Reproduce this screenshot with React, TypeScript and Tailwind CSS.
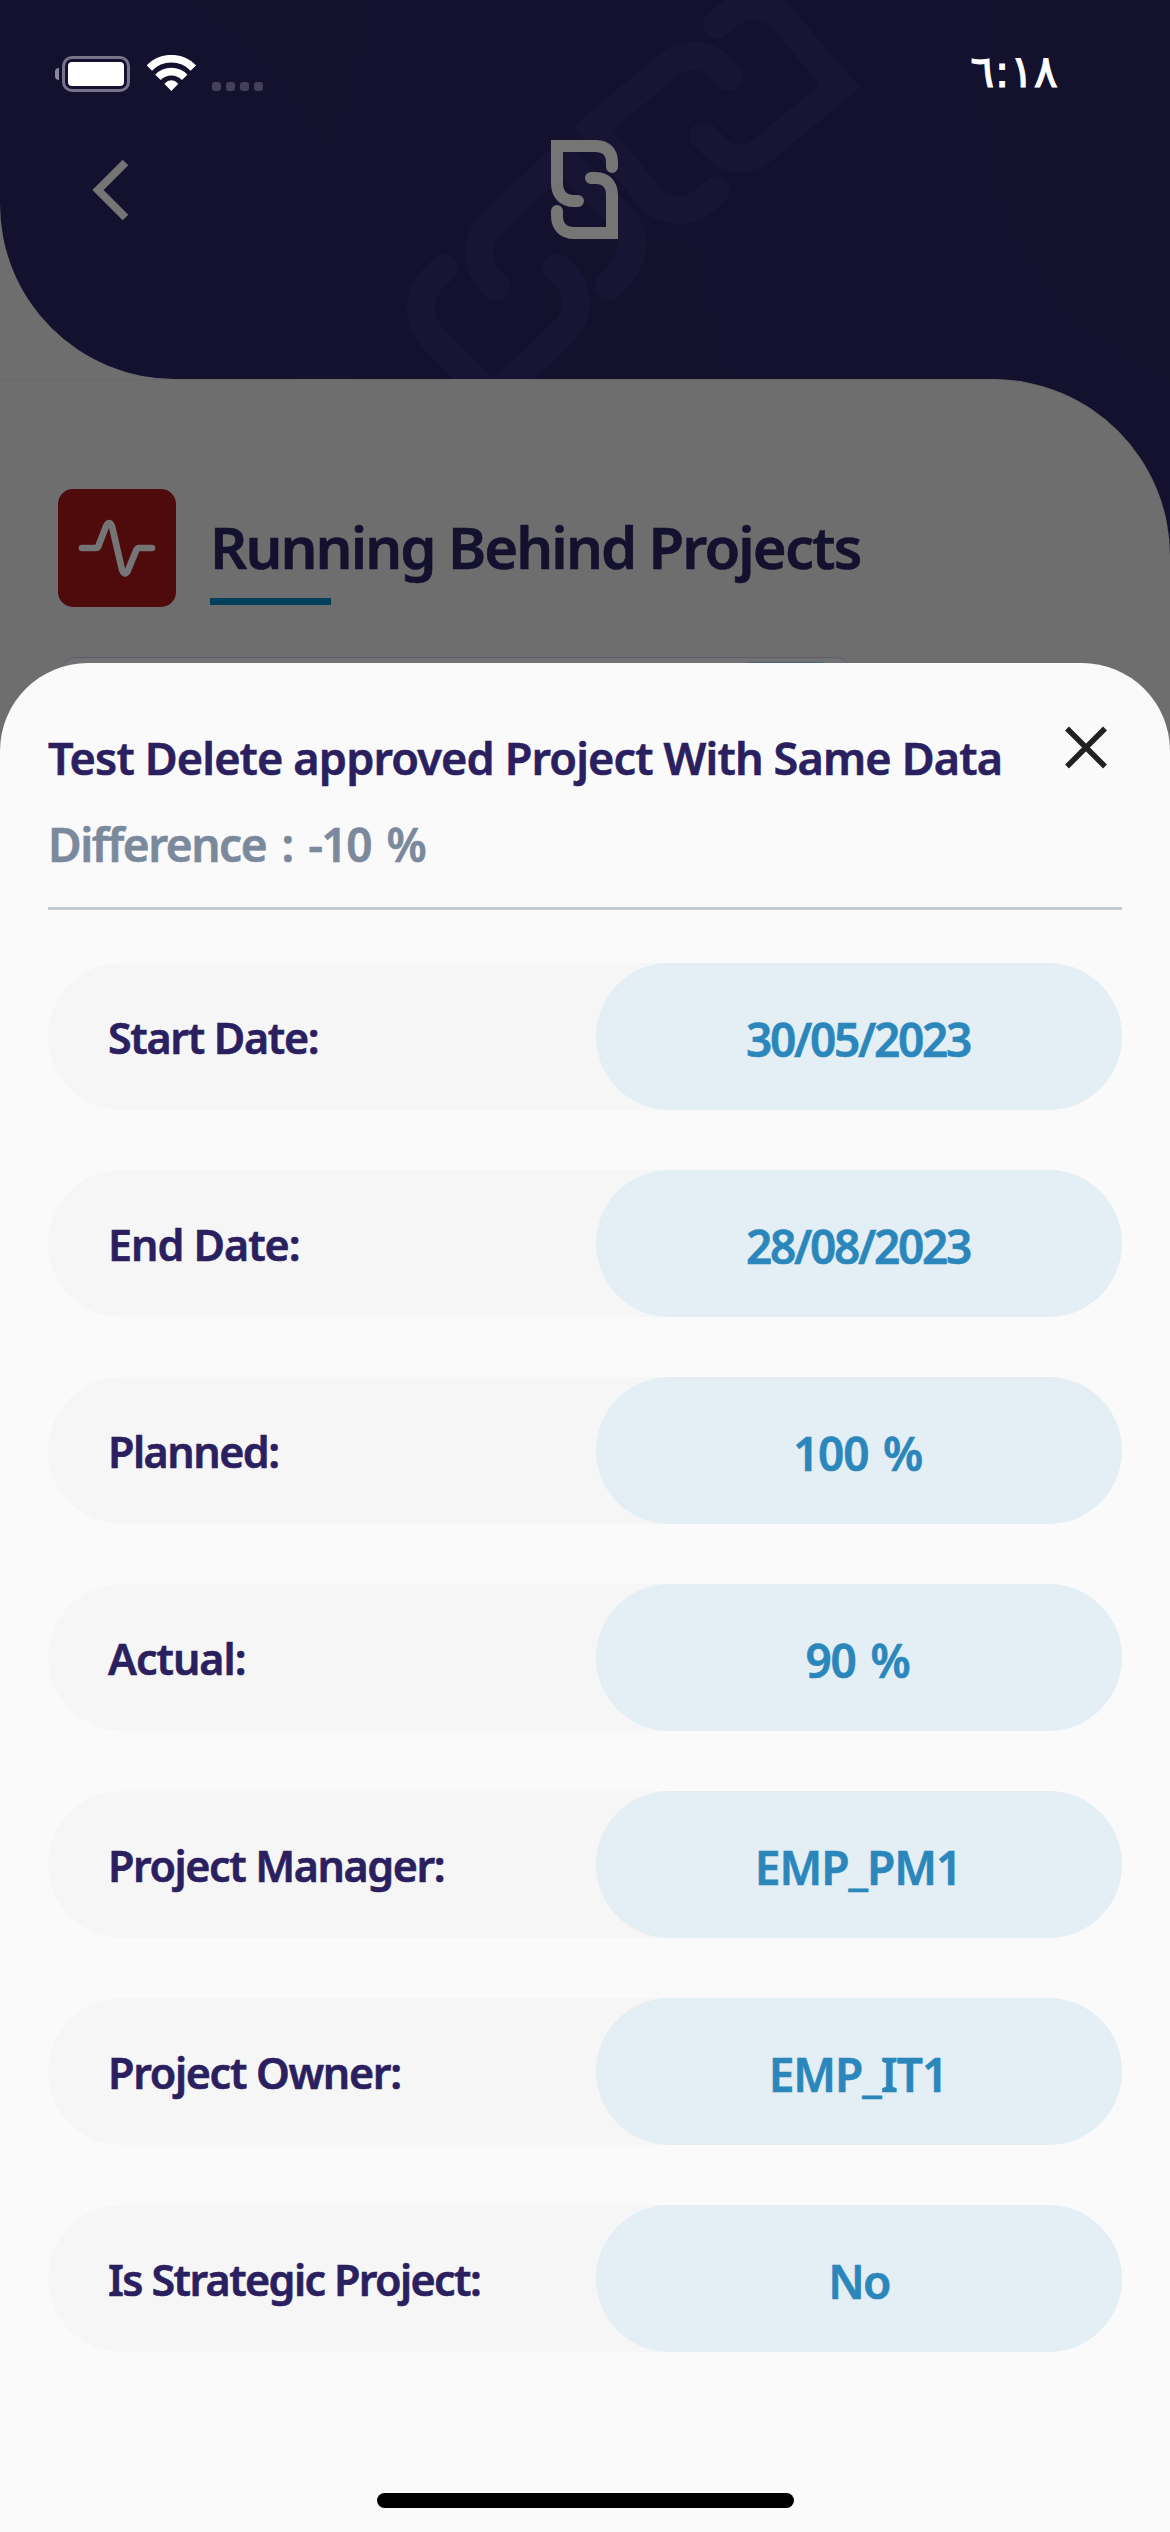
const rows = [
  { label: "Start Date:", value: "30/05/2023", labelClass: "tracking-[-1.3px]", valueClass: "tracking-[-2.3px] mr-[2px]" },
  { label: "End Date:", value: "28/08/2023", labelClass: "tracking-[-1px]", valueClass: "tracking-[-2.3px] mr-[2px]" },
  { label: "Planned:", value: "100 %", labelClass: "tracking-[-1.5px]", valueClass: "tracking-[-1.2px] mr-[3px] [word-spacing:4px]" },
  { label: "Actual:", value: "90 %", labelClass: "tracking-[-1px]", valueClass: "tracking-[-1.2px] mr-[3px] [word-spacing:4px]" },
  { label: "Project Manager:", value: "EMP_PM1", labelClass: "tracking-[-1.4px]", valueClass: "tracking-[-1px] mr-[2px]" },
  { label: "Project Owner:", value: "EMP_IT1", labelClass: "tracking-[-1.3px]", valueClass: "tracking-[-1px] mr-[2px]" },
  { label: "Is Strategic Project:", value: "No", labelClass: "tracking-[-1.6px]", valueClass: "tracking-[-1.8px]" },
];

function HeaderPattern() {
  return (
    <svg className="absolute inset-0 h-full w-full" viewBox="0 0 1170 379" aria-hidden="true">
      <path d="M190 0C260 40 310 110 328 150L370 0Z" fill="#13112b" />
      <path d="M317 150C297 250 297 330 297 379H357C372 310 362 220 328 150Z" fill="#14122f" />
      <path d="M1000 0H1170V379L1090 330C990 240 970 110 1000 0Z" fill="#13112c" />
      <path d="M560 240H690C700 300 715 340 725 379H556Q545 310 560 240Z" fill="#13112b" />
      <g
        transform="translate(380 0) scale(0.33333)"
        fill="none"
        stroke="#171533"
        strokeWidth="85"
        strokeLinecap="round"
      >
        <path d="M1012 73L1040 48C1090 5 1165 5 1210 58L1380 258L1150 448C1105 485 1050 485 1010 446L972 408" />
        <path d="M1047 232L1010 192C970 160 915 160 870 192L640 384L810 592C855 640 930 640 975 600L1008 572" />
        <path d="M347 860L325 835C285 785 285 725 335 670L545 472L715 640C765 690 770 765 720 825L687 858" />
        <path d="M192 805L165 830C110 880 110 950 155 1010L340 1195L555 990C600 940 595 870 560 830L530 803" />
      </g>
    </svg>
  );
}

function StatusBar() {
  return (
    <div className="relative flex h-[112px] items-start pl-[55px] pr-[112px]">
      <div className="mt-[56px] flex items-center gap-[3px]">
        <div className="h-[12px] w-[4px] rounded-l-full bg-[#8a889a]" />
        <div className="h-9 w-[68px] rounded-[10px] border-[3px] border-[#76738a] p-[3px]">
          <div className="h-full rounded-[4px] bg-white" />
        </div>
      </div>
      <svg className="ml-[17px] mt-[55px] h-[36px] w-[49px]" viewBox="440 165 147 108" aria-hidden="true">
        <path d="M447 204A92 92 0 0 1 579 204" fill="none" stroke="#fff" strokeWidth="23" />
        <path d="M473 232A55.5 55.5 0 0 1 553 232" fill="none" stroke="#fff" strokeWidth="23" />
        <path d="M513 273L492 251Q513 231 534 251Z" fill="#fff" />
      </svg>
      <div className="ml-[16px] mt-[82px] flex gap-[5px]">
        <div className="size-[9px] rounded-[3px] bg-[#444059]" />
        <div className="size-[9px] rounded-[3px] bg-[#444059]" />
        <div className="size-[9px] rounded-[3px] bg-[#444059]" />
        <div className="size-[9px] rounded-[3px] bg-[#444059]" />
      </div>
      <div className="ml-auto mt-[47px] font-['DejaVu_Sans'] text-[45px] font-normal leading-[50px] tracking-[-6.5px] text-white [-webkit-text-stroke:1px_white]">
        ٦:١٨
      </div>
    </div>
  );
}

export default function App() {
  return (
    <div className="relative h-[2532px] w-[1170px] overflow-hidden bg-[#6e6e6e] font-['Noto_Sans',sans-serif] font-semibold [-webkit-text-stroke:0.6px_currentColor]">
      <header className="relative h-[379px] overflow-hidden rounded-bl-[175px] bg-[#13112e]">
        <HeaderPattern />
        <StatusBar />
        <div className="relative flex items-start">
          <svg className="ml-[90px] mt-[46px] h-[64px] w-[40px]" viewBox="90 158 40 64" aria-hidden="true">
            <path d="M125.5 162.5L98 190L125.5 217.5" fill="none" stroke="#757575" strokeWidth="8" />
          </svg>
          <svg className="ml-[421px] mt-[28px] h-[99px] w-[67px]" viewBox="551 140 67 99" aria-hidden="true">
            <g fill="none" stroke="#757575" strokeWidth="12" strokeLinecap="round">
              <path d="M612 167V162C612 152 606 146 596 146H557V183C557 194 563 201 574 201H578" />
              <path d="M591 178H596C606 178 612 185 612 195V233H574C563 233 557 226 557 216V211" />
            </g>
          </svg>
        </div>
      </header>

      <div className="bg-[#13112e]">
        <main className="h-[2153px] rounded-tr-[177px] border-t border-[#69686d] bg-[#6e6e6e] pt-[109px]">
          <div className="ml-[58px] flex">
            <div className="flex size-[118px] items-center justify-center rounded-[15px] bg-[#4f0a0b]">
              <svg className="h-[60px] w-[80px]" viewBox="231 175 240 180" aria-hidden="true">
                <path
                  d="M246 265H289Q293 265 295 260L318 200Q328 181 336 200L366 330Q374 351 384 332L409 271Q412 265 417 265H456"
                  fill="none"
                  stroke="#757575"
                  strokeWidth="20"
                  strokeLinecap="round"
                  strokeLinejoin="round"
                />
              </svg>
            </div>
            <div className="ml-[34px] pt-[28px]">
              <h1 className="whitespace-nowrap text-[58px] leading-[60px] tracking-[-1.9px] text-[#13112e]">
                Running Behind Projects
              </h1>
              <div className="mt-[21px] h-[7px] w-[121px] bg-[#00405a]" />
            </div>
          </div>
          <div className="ml-[59px] mt-[50px] h-[200px] w-[794px] rounded-[18px] border border-[#5d5a6c] bg-[#727272] pl-[677px] pt-[4px]">
            <div className="h-[60px] w-[96px] rounded-[12px] bg-[#46617a]" />
          </div>
        </main>
      </div>

      <section className="absolute inset-x-0 bottom-0 flex h-[1869px] flex-col rounded-t-[88px] bg-[#fafafa] px-12 pt-[63px]">
        <div className="flex items-start justify-between">
          <h2 className="mt-[2px] whitespace-nowrap text-[45px] leading-[60px] tracking-[-0.85px] text-[#2a2060]">
            Test Delete approved Project With Same Data
          </h2>
          <svg className="mr-[15px] h-[43px] w-[42px]" viewBox="0 0 42 43" aria-hidden="true">
            <path d="M2 2.5L40 40.5M40 2.5L2 40.5" stroke="#212121" strokeWidth="5.5" />
          </svg>
        </div>
        <p className="mt-[26px] whitespace-nowrap text-[46px] leading-[60px] tracking-[-1.5px] text-[#7b899c] [word-spacing:5px]">
          Difference : -10 %
        </p>
        <div className="mt-[33px] h-[3px] shrink-0 bg-[#c3cbce]" />
        <div className="mt-[53px] flex flex-col gap-[60px]">
          {rows.map((row) => (
            <div key={row.label} className="flex h-[147px] items-center rounded-full bg-[#f6f6f6]">
              <div className="w-[548px] whitespace-nowrap pl-[60px] pt-[4px] text-[43px] text-[#2a2060]">
                <span className={row.labelClass}>{row.label}</span>
              </div>
              <div className="flex h-full w-[526px] items-center justify-center rounded-full bg-[#e3eef5] pt-[5px] text-[46px] text-[#2b87bb]">
                <span className={row.valueClass}>{row.value}</span>
              </div>
            </div>
          ))}
        </div>
        <div className="mb-6 mt-auto h-[15px] w-[417px] self-center rounded-full bg-black" />
      </section>
    </div>
  );
}
